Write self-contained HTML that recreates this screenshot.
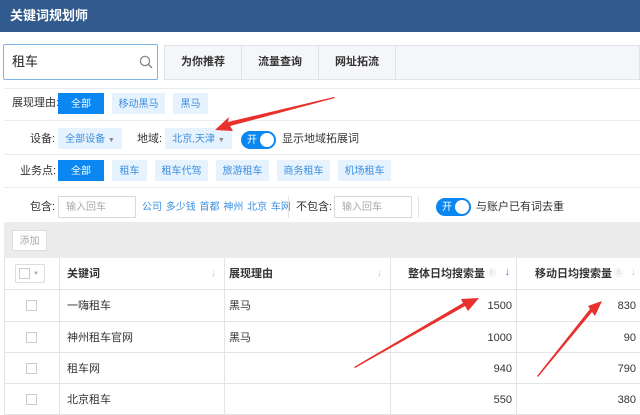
<!DOCTYPE html>
<html><head><meta charset="utf-8"><style>
*{margin:0;padding:0;box-sizing:border-box}
body{width:640px;height:413px;overflow:hidden;background:#fff;font-family:"Liberation Sans","Noto Sans CJK SC",sans-serif;font-size:11px;line-height:13px;color:#333;position:relative}
.a{position:absolute}
.hdr{left:0;top:0;width:640px;height:32px;background:#315a8e;color:#fff;font-size:13px;font-weight:bold;line-height:32px;padding-left:10px}
.search{left:3px;top:44px;width:155px;height:36px;border:1px solid #7fb1e3;border-radius:2px;line-height:34px;padding-left:8px;font-size:13px;color:#222}
.tabs{left:164px;top:45px;width:476px;height:35px;background:#f4f6f9;border:1px solid #dfe3e8}
.tab{position:absolute;top:0;height:33px;line-height:33px;text-align:center;font-weight:bold;font-size:11px;border-right:1px solid #dfe3e8;color:#333}
.lbl{font-size:11px;color:#333}
.btn{position:absolute;height:21px;line-height:23px;text-align:center;font-size:10px;color:#3d8fe0;background:#e6f2fd}
.btn.on{background:#0b87f2;color:#fff}
.sep{left:4px;width:636px;height:1px;background:#e8ebef}
.tog{position:absolute;width:35px;height:18px;border-radius:9px;background:#0b87f2;color:#fff;font-size:10px;line-height:20px;padding-left:6px}
.tog i{position:absolute;right:2px;top:2px;width:14px;height:14px;border-radius:50%;background:#fff}
.inp{position:absolute;height:22px;border:1px solid #d6d9de;line-height:22px;padding-left:7px;color:#aaa;font-size:10px}
.row{position:absolute;left:4px;width:636px;border-bottom:1px solid #e2e4e8}
.c{position:absolute;top:0;height:100%;border-right:1px solid #e2e4e8}
.cb{position:absolute;width:11px;height:11px;border:1px solid #ccc;background:#fff}
</style></head><body>
<div class="a hdr">关键词规划师</div>
<div class="a search">租车
<svg class="a" style="left:135px;top:10px" width="14" height="14" viewBox="0 0 14 14"><circle cx="6" cy="6" r="4.6" fill="none" stroke="#888" stroke-width="1.3"/><line x1="9.4" y1="9.4" x2="13" y2="13" stroke="#888" stroke-width="1.4"/></svg></div>
<div class="a tabs">
<div class="tab" style="left:0;width:77px">为你推荐</div>
<div class="tab" style="left:77px;width:77px">流量查询</div>
<div class="tab" style="left:154px;width:77px">网址拓流</div>
</div>
<div class="a sep" style="top:88px"></div>
<div class="a lbl" style="left:12px;top:97px">展现理由:</div>
<div class="btn on" style="left:58px;top:93px;width:46px">全部</div>
<div class="btn" style="left:112px;top:93px;width:53px">移动黑马</div>
<div class="btn" style="left:173px;top:93px;width:35px">黑马</div>
<div class="a sep" style="top:120px"></div>
<div class="a lbl" style="left:30px;top:133px">设备:</div>
<div class="btn" style="left:58px;top:128px;width:64px">全部设备 <span style="font-size:7px;color:#888">▼</span></div>
<div class="a lbl" style="left:137px;top:133px">地域:</div>
<div class="btn" style="left:165px;top:128px;width:67px">北京,天津 <span style="font-size:7px;color:#888">▼</span></div>
<div class="tog" style="left:241px;top:131px">开<i></i></div>
<div class="a lbl" style="left:282px;top:133px">显示地域拓展词</div>
<div class="a sep" style="top:154px"></div>
<div class="a lbl" style="left:20px;top:165px">业务点:</div>
<div class="btn on" style="left:58px;top:160px;width:46px">全部</div>
<div class="btn" style="left:112px;top:160px;width:35px">租车</div>
<div class="btn" style="left:155px;top:160px;width:53px">租车代驾</div>
<div class="btn" style="left:216px;top:160px;width:53px">旅游租车</div>
<div class="btn" style="left:277px;top:160px;width:53px">商务租车</div>
<div class="btn" style="left:338px;top:160px;width:53px">机场租车</div>
<div class="a sep" style="top:187px"></div>
<div class="a lbl" style="left:30px;top:201px">包含:</div>
<div class="inp" style="left:58px;top:196px;width:78px">输入回车</div>
<div class="a" style="left:142px;top:201px;color:#3d8fe0;font-size:10px;word-spacing:1px">公司 多少钱 首都 神州 北京 车网</div>
<div class="a" style="left:288px;top:196px;width:1px;height:22px;background:#e2e4e8"></div>
<div class="a lbl" style="left:296px;top:201px">不包含:</div>
<div class="inp" style="left:334px;top:196px;width:78px">输入回车</div>
<div class="a" style="left:418px;top:196px;width:1px;height:22px;background:#e2e4e8"></div>
<div class="tog" style="left:436px;top:198px">开<i></i></div>
<div class="a lbl" style="left:476px;top:201px">与账户已有词去重</div>
<div class="a" style="left:4px;top:222px;width:636px;height:36px;background:#ececec"></div>
<div class="a" style="left:12px;top:230px;width:35px;height:21px;background:#fff;border:1px solid #ddd;color:#aaa;font-size:10px;line-height:21px;text-align:center">添加</div>
<div class="row" style="top:258px;height:32px;font-weight:bold">
<div class="c" style="left:0;width:56px"><div class="a" style="left:11px;top:6px;width:30px;height:19px;border:1px solid #ddd;border-radius:2px"><div class="cb" style="left:3px;top:3px"></div><span class="a" style="left:17px;top:3px;font-size:6px;color:#aaa">▼</span></div></div>
<div class="c" style="left:56px;width:165px"><span class="a" style="left:7px;top:10px">关键词</span><span class="a" style="right:8px;top:9px;color:#ccc">↓</span></div>
<div class="c" style="left:221px;width:166px"><span class="a" style="left:4px;top:10px">展现理由</span><span class="a" style="right:8px;top:9px;color:#ccc">↓</span></div>
<div class="c" style="left:387px;width:126px"><span class="a" style="left:17px;top:10px">整体日均搜索量</span><span class="a" style="right:20px;top:9px;color:#ccc;font-size:9px;font-weight:normal">⓪</span><span class="a" style="right:6px;top:8px;color:#2f7de0">↓</span></div>
<div class="c" style="left:513px;width:123px;border:none"><span class="a" style="left:18px;top:10px">移动日均搜索量</span><span class="a" style="right:17px;top:9px;color:#ccc;font-size:9px;font-weight:normal">⓪</span><span class="a" style="right:4px;top:8px;color:#ccc">↓</span></div>
</div>
<div class="row" style="top:290px;height:32px"><div class="c" style="left:0;width:56px"><div class="cb" style="left:22px;top:10px"></div></div><div class="c" style="left:56px;width:165px"><span class="a" style="left:7px;top:10px">一嗨租车</span></div><div class="c" style="left:221px;width:166px"><span class="a" style="left:4px;top:10px">黑马</span></div><div class="c" style="left:387px;width:126px"><span class="a" style="right:4px;top:10px">1500</span></div><span class="a" style="right:4px;top:10px">830</span></div>
<div class="row" style="top:322px;height:31px"><div class="c" style="left:0;width:56px"><div class="cb" style="left:22px;top:10px"></div></div><div class="c" style="left:56px;width:165px"><span class="a" style="left:7px;top:10px">神州租车官网</span></div><div class="c" style="left:221px;width:166px"><span class="a" style="left:4px;top:10px">黑马</span></div><div class="c" style="left:387px;width:126px"><span class="a" style="right:4px;top:10px">1000</span></div><span class="a" style="right:4px;top:10px">90</span></div>
<div class="row" style="top:353px;height:31px"><div class="c" style="left:0;width:56px"><div class="cb" style="left:22px;top:10px"></div></div><div class="c" style="left:56px;width:165px"><span class="a" style="left:7px;top:10px">租车网</span></div><div class="c" style="left:221px;width:166px"></div><div class="c" style="left:387px;width:126px"><span class="a" style="right:4px;top:10px">940</span></div><span class="a" style="right:4px;top:10px">790</span></div>
<div class="row" style="top:384px;height:31px"><div class="c" style="left:0;width:56px"><div class="cb" style="left:22px;top:10px"></div></div><div class="c" style="left:56px;width:165px"><span class="a" style="left:7px;top:10px">北京租车</span></div><div class="c" style="left:221px;width:166px"></div><div class="c" style="left:387px;width:126px"><span class="a" style="right:4px;top:10px">550</span></div><span class="a" style="right:4px;top:10px">380</span></div>
<div class="a" style="left:4px;top:258px;width:1px;height:155px;background:#e2e4e8"></div>
<svg class="a" style="left:0;top:0" width="640" height="413" viewBox="0 0 640 413">
<g fill="#e8302c">
<polygon points="334,97 228,122 229,117 215,130 233,131 230,126 335,98"/>
<polygon points="355,368 465,306 468,311 479,298 461,299 463,303 354,367"/>
<polygon points="538,377 592,312 595,316 602,301 588,306 590,309 537,376"/>
</g></svg>
</body></html>
